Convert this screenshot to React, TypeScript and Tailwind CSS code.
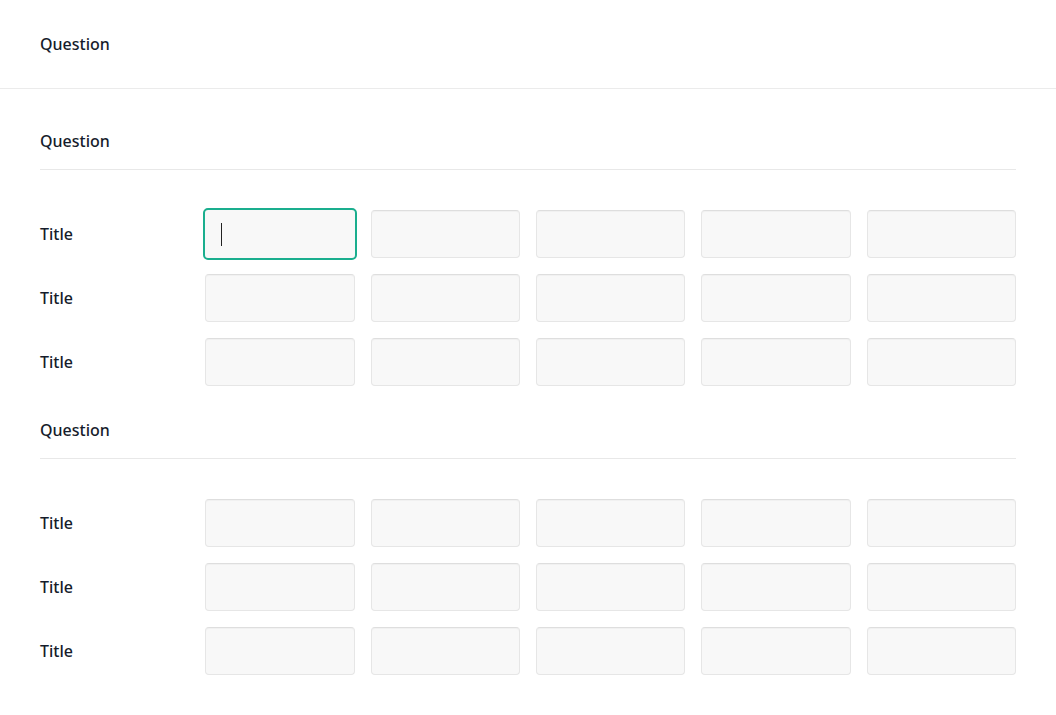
import React from "react";

function Cell({ focused }: { focused?: boolean }) {
  if (focused) {
    return (
      <div className="relative h-12">
        <div className="absolute -inset-[2px] rounded-[5px] border-2 border-[#1aae8e] bg-[#f8f8f8]">
          <span className="absolute left-[16px] top-[13px] h-[23px] w-px bg-[#222]" />
        </div>
      </div>
    );
  }
  return (
    <div className="h-12 rounded-[4px] border border-[#e6e6e6] border-t-[#dedede] bg-[#f8f8f8] shadow-[inset_0_1px_1px_rgba(0,0,0,0.03)]" />
  );
}

function Section({ first, focusFirst }: { first?: boolean; focusFirst?: boolean }) {
  return (
    <div className={first ? "pt-10" : "pt-8"}>
      <div className="border-b border-[#e8e8e8] pb-4 text-[16px] font-medium leading-6 text-[#161c2b]">
        Question
      </div>
      <div className="mt-10 flex flex-col gap-4">
        {[0, 1, 2].map((r) => (
          <div key={r} className="grid grid-cols-6 gap-4">
            <div className="flex items-center text-[16px] font-medium text-[#161c2b]">Title</div>
            {[0, 1, 2, 3, 4].map((c) => (
              <Cell key={c} focused={focusFirst && r === 0 && c === 0} />
            ))}
          </div>
        ))}
      </div>
    </div>
  );
}

export default function App() {
  return (
    <div
      className="h-[715px] w-[1056px] overflow-hidden bg-white"
      style={{ fontFamily: '"Noto Sans", "Open Sans", sans-serif' }}
    >
      <div className="flex h-[89px] items-center border-b border-[#ebebeb] px-10 text-[16px] font-medium text-[#161c2b]">
        Question
      </div>
      <div className="px-10 pb-10">
        <Section first focusFirst />
        <Section />
      </div>
    </div>
  );
}
